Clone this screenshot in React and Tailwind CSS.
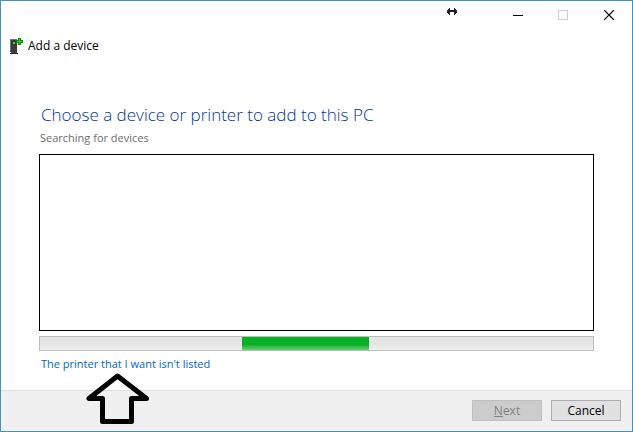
import React from 'react';

// Position and width of the moving chunk, in percent of the track
const marquee = { offset: 36.6, size: 22.9 };

const DeviceIcon = () => (
  <svg width="14" height="16" viewBox="0 0 14 16" shapeRendering="crispEdges" aria-hidden="true">
    <path d="M1 1h7v13H1z" fill="#3b3b3d" />
    <path d="M1 1h7v1H1zM1 2h1v11H1z" fill="#77777a" />
    <path d="M1 15h8v1H1z" fill="#242426" />
    <path d="M2 14h6v1H2z" fill="#4a4a4c" />
    <path d="M4 4h2v2H4z" fill="#2fe02f" />
    <path d="M9 0h3v2h2v3h-2v2H9V5H7V2h2z" fill="#078a0b" />
    <path d="M10 1h1v2h2v1h-2v2h-1V4H8V3h2z" fill="#18dc1e" />
  </svg>
);

const ResizeCursor = () => (
  <svg width="10" height="7" viewBox="0 0 10 7" shapeRendering="crispEdges" aria-hidden="true">
    <path d="M2 0h1v2h4V0h1v1h1v1h1v3H9v1H8v1H7V4H3v3H2V6H1V5H0V2h1V1h1z" fill="#222226" />
  </svg>
);

const WindowButton = ({ label, disabled, children }) => (
  <button
    type="button"
    aria-label={label}
    disabled={disabled}
    className="flex h-[29px] w-[46px] items-center justify-center enabled:hover:bg-[#e5e5e5]"
  >
    <svg width="11" height="11" viewBox="0 0 11 11" fill="none" stroke={disabled ? '#cccccc' : '#000000'}>
      {children}
    </svg>
  </button>
);

const App = () => {
  return (
    <div className="flex min-h-screen flex-col border border-[#4a8fb9] bg-white font-['Open_Sans','Noto_Sans',sans-serif] text-[12px] leading-4 text-black">
      {/* Title bar */}
      <header className="flex justify-end">
        <div className="mr-[37px] pt-[7px]">
          <ResizeCursor />
        </div>
        <WindowButton label="Minimize">
          <path d="M1 5.5h10" shapeRendering="crispEdges" />
        </WindowButton>
        <WindowButton label="Maximize" disabled>
          <path d="M.5.5h9v9h-9z" shapeRendering="crispEdges" />
        </WindowButton>
        <WindowButton label="Close">
          <path d="M.5.5l9 9M9.5.5l-9 9" strokeWidth="1.2" strokeLinecap="square" />
        </WindowButton>
      </header>

      <div className="mt-2 flex items-center gap-[5px] px-2">
        <DeviceIcon />
        <h1>Add a device</h1>
      </div>

      <main className="flex grow flex-col px-[38px] pt-[49px]">
        <h2 id="choose" className="pl-0.5 text-[17px] leading-6 font-light text-[#003399]">
          Choose a device or printer to add to this PC
        </h2>
        <p className="mt-[3px] pl-px text-[11px] text-[#6d6d6d]">Searching for devices</p>

        <ul role="listbox" aria-labelledby="choose" className="mt-2 min-h-[177px] grow border border-black" />

        <div
          role="progressbar"
          aria-label="Searching for devices"
          className="mt-[5px] h-[15px] border border-[#bcbcbc] bg-linear-to-b from-[#e6e6e6] from-60% to-[#f0f0f0]"
        >
          <div
            className="h-full bg-linear-to-b from-[#06b025] from-60% to-[#62cf74]"
            style={{ marginLeft: `${marquee.offset}%`, width: `${marquee.size}%` }}
          />
        </div>

        <div className="relative mt-[5px] mb-[18px] pl-0.5">
          <a href="#manual" className="block text-[11px] text-[#0066cc] hover:underline">
            The printer that I want isn't listed
          </a>
          {/* Arrow pointing at the link */}
          <svg
            className="pointer-events-none absolute top-4 left-[47px]"
            width="64"
            height="53"
            viewBox="0 0 64 53"
            fill="none"
            stroke="#000000"
            strokeWidth="5"
            strokeLinejoin="round"
            aria-hidden="true"
          >
            <path d="M31.500 4L3 26.500H16.500V49.500H45.500V26.500H60.500z" />
          </svg>
        </div>
      </main>

      <footer className="flex justify-end gap-[9px] border-t border-[#dfdfdf] bg-[#f0f0f0] px-[11px] pt-[9px] pb-[10px]">
        <button
          type="button"
          disabled
          className="h-[21px] w-[70px] border border-[#bfbfbf] bg-[#cccccc] text-[#838383]"
        >
          <span className="underline">N</span>ext
        </button>
        <button type="button" className="h-[21px] w-[70px] border border-[#adadad] bg-[#e1e1e1] hover:bg-[#e5f1fb]">
          Cancel
        </button>
      </footer>
    </div>
  );
};

export default App;
